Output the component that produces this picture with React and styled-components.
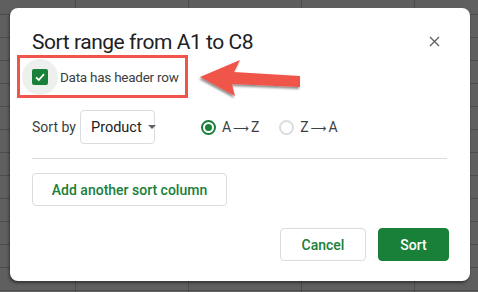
import styled, { createGlobalStyle } from "styled-components";

const GlobalStyle = createGlobalStyle`
  html, body {
    margin: 0;
    padding: 0;
  }
  body {
    font-family: Roboto, "Liberation Sans", Arial, sans-serif;
    color: #3c4043;
  }
`;

const Page = styled.div`
  width: 478px;
  height: 292px;
  box-sizing: border-box;
  padding: 8px 8px 11px 10px;
  background-color: #5f5f5f;
  background-image: linear-gradient(#4c4c4c 1px, transparent 1px),
    linear-gradient(90deg, #4c4c4c 1px, transparent 1px);
  background-size: 113px 23px;
  background-position: -38px 14px;
  overflow: hidden;
`;

const Dialog = styled.div`
  position: relative;
  width: 460px;
  height: 273px;
  box-sizing: border-box;
  background: #fff;
  border-radius: 8px;
  box-shadow: -1px 2px 3px rgba(0, 0, 0, 0.45);
  padding: 20px 23px 20px 22px;
  display: flex;
  flex-direction: column;
`;

const Header = styled.div`
  display: flex;
  align-items: center;
  justify-content: space-between;
  height: 27px;
`;

const Title = styled.h1`
  margin: 0;
  font-size: 21px;
  font-weight: 400;
  color: #202124;
  letter-spacing: -0.45px;
`;

const Close = styled.button`
  all: unset;
  width: 16px;
  height: 16px;
  display: flex;
  align-items: center;
  justify-content: center;
  margin-right: 5px;
  cursor: pointer;
`;

const Highlight = styled.div`
  margin-left: -15px;
  width: 171px;
  height: 43px;
  box-sizing: border-box;
  border: 3px solid #f0544a;
  display: flex;
  align-items: center;
  padding-left: 2px;
  gap: 2px;
  white-space: nowrap;
`;

const Ripple = styled.span`
  flex: none;
  width: 36px;
  height: 36px;
  border-radius: 50%;
  background: #eef0ee;
  display: flex;
  align-items: center;
  justify-content: center;
`;

const CheckBox = styled.span`
  width: 16px;
  height: 16px;
  border-radius: 2px;
  background: #188038;
  display: flex;
  align-items: center;
  justify-content: center;
`;

const Label = styled.span`
  font-size: 13.5px;
  color: #3c4043;
  letter-spacing: -0.25px;
`;

const Arrow = styled.svg`
  position: absolute;
  left: 186px;
  top: 42px;
  overflow: visible;
`;

const SortRow = styled.div`
  display: flex;
  align-items: center;
  margin-top: 12px;
  height: 34px;
`;

const SortLabel = styled.span`
  font-size: 14px;
  width: 48px;
`;

const Select = styled.div`
  width: 75px;
  height: 34px;
  box-sizing: border-box;
  border: 1px solid #dadce0;
  border-radius: 4px;
  display: flex;
  align-items: center;
  padding-left: 10px;
  font-size: 14.5px;
  color: #202124;
  gap: 6px;
`;

const Caret = styled.span`
  width: 0;
  height: 0;
  border-left: 4px solid transparent;
  border-right: 4px solid transparent;
  border-top: 4px solid #5f6368;
`;

const RadioGroup = styled.div`
  display: flex;
  align-items: center;
  margin-left: 46px;
  gap: 20px;
`;

const RadioOption = styled.label`
  display: flex;
  align-items: center;
  gap: 6px;
  font-size: 14px;
  color: #3c4043;
`;

const LongArrow = styled.span`
  font-family: "DejaVu Sans", sans-serif;
  font-size: 11px;
  margin: 0 2px;
`;

const RadioCircle = styled.span`
  width: 15px;
  height: 15px;
  box-sizing: border-box;
  border-radius: 50%;
  border: 2px solid ${(p) => (p.$checked ? "#188038" : "#dadce0")};
  display: flex;
  align-items: center;
  justify-content: center;

  &::after {
    content: "";
    width: 7px;
    height: 7px;
    border-radius: 50%;
    background: ${(p) => (p.$checked ? "#188038" : "transparent")};
  }
`;

const Divider = styled.hr`
  margin: 14px 0 0;
  border: 0;
  border-top: 1px solid #dadce0;
`;

const OutlineButton = styled.button`
  all: unset;
  box-sizing: border-box;
  height: 33px;
  border: 1px solid #dadce0;
  border-radius: 4px;
  color: #188038;
  font-family: Roboto, "Liberation Sans", Arial, sans-serif;
  font-size: 14px;
  font-weight: 500;
  display: flex;
  align-items: center;
  justify-content: center;
  width: ${(p) => p.$width}px;
`;

const AddRow = styled.div`
  margin-top: 14px;
  display: flex;
`;

const Footer = styled.div`
  margin-top: auto;
  display: flex;
  justify-content: flex-end;
  gap: 12px;
  margin-right: -2px;
`;

const PrimaryButton = styled(OutlineButton)`
  background: #188038;
  border-color: #188038;
  color: #fff;
`;

function App() {
  return (
    <>
      <GlobalStyle />
      <Page>
        <Dialog>
          <Header>
            <Title>Sort range from A1 to C8</Title>
            <Close aria-label="Close">
              <svg width="11" height="11" viewBox="0 0 11 11">
                <path d="M1 1L10 10M10 1L1 10" stroke="#5f6368" strokeWidth="1.4" />
              </svg>
            </Close>
          </Header>

          <Highlight>
            <Ripple>
              <CheckBox>
                <svg width="12" height="12" viewBox="0 0 12 12">
                  <path d="M2 6.3L4.8 9L10 3.2" fill="none" stroke="#fff" strokeWidth="1.8" />
                </svg>
              </CheckBox>
            </Ripple>
            <Label>Data has header row</Label>
          </Highlight>

          <Arrow width="110" height="50" viewBox="0 0 110 50">
            <defs>
              <filter id="shadow" x="-20%" y="-30%" width="140%" height="160%">
                <feDropShadow dx="-1" dy="2" stdDeviation="1" floodColor="#000" floodOpacity="0.45" />
              </filter>
            </defs>
            <polygon
              points="4,27 44,10 38,22 104,26 104,37 36,34 39,46"
              fill="#f0544a"
              filter="url(#shadow)"
            />
          </Arrow>

          <SortRow>
            <SortLabel>Sort by</SortLabel>
            <Select>
              Product
              <Caret />
            </Select>
            <RadioGroup>
              <RadioOption>
                <RadioCircle $checked />
                <span>
                  A<LongArrow>⟶</LongArrow>Z
                </span>
              </RadioOption>
              <RadioOption>
                <RadioCircle />
                <span>
                  Z<LongArrow>⟶</LongArrow>A
                </span>
              </RadioOption>
            </RadioGroup>
          </SortRow>

          <Divider />

          <AddRow>
            <OutlineButton $width={195}>Add another sort column</OutlineButton>
          </AddRow>

          <Footer>
            <OutlineButton $width={86}>Cancel</OutlineButton>
            <PrimaryButton $width={71}>Sort</PrimaryButton>
          </Footer>
        </Dialog>
      </Page>
    </>
  );
}

export default App;
